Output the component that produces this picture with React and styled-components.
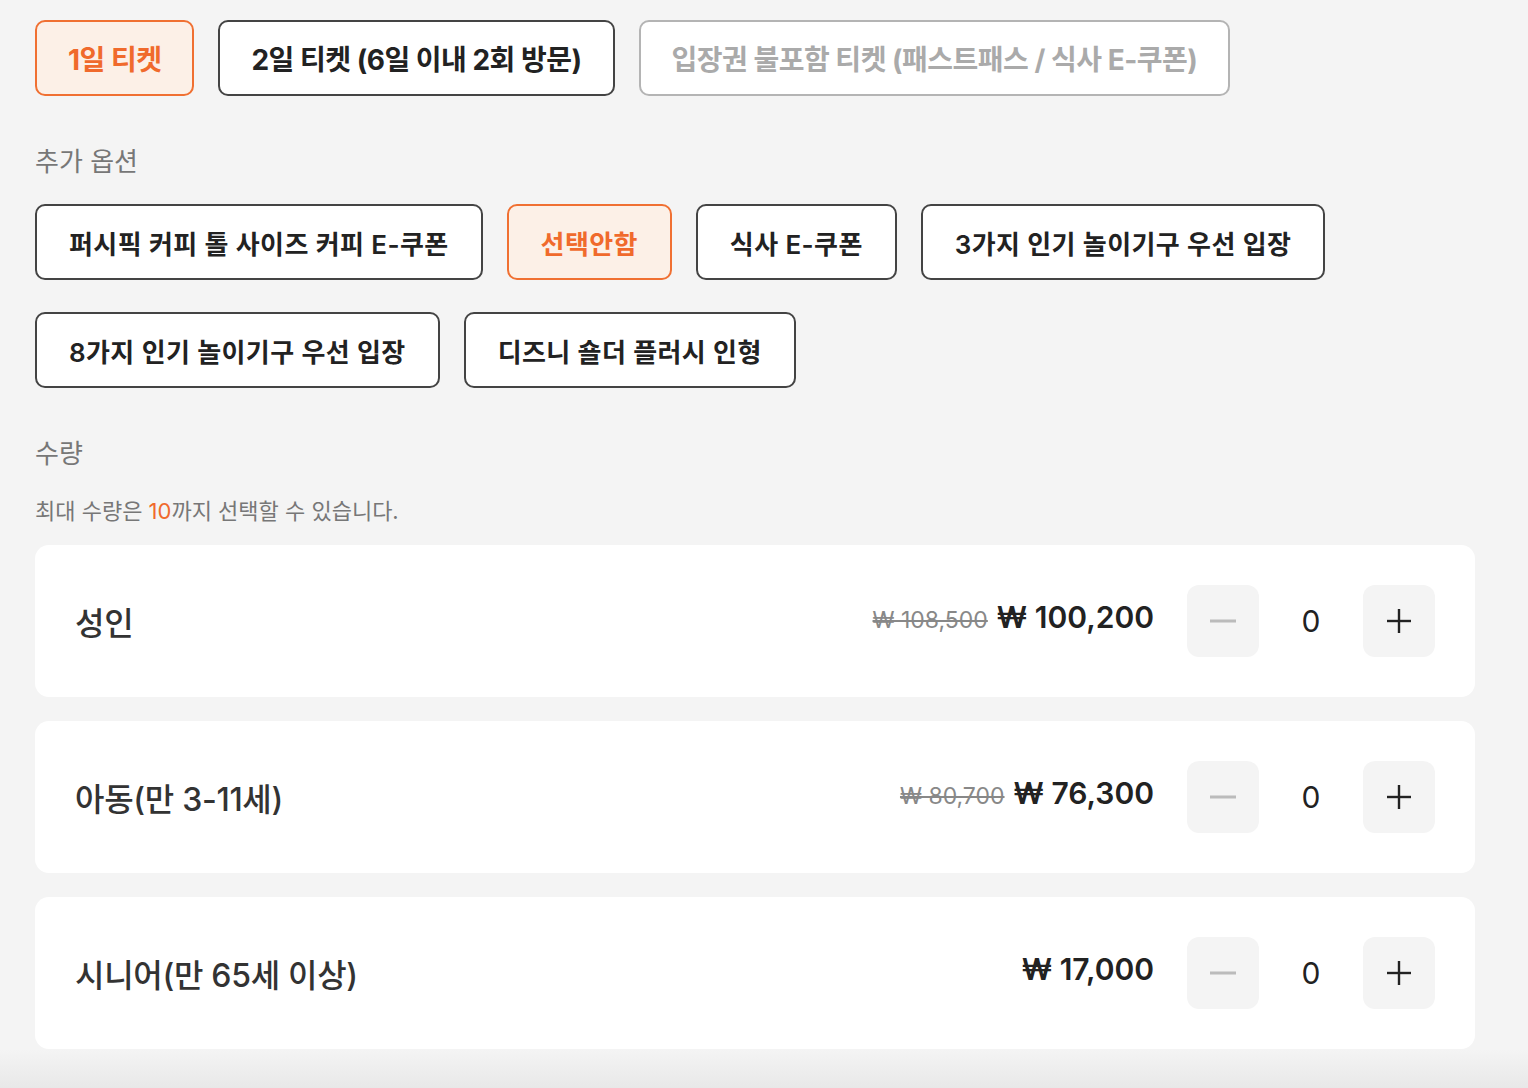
import React, { useState } from "react";
import styled, { createGlobalStyle, css } from "styled-components";

const GlobalStyle = createGlobalStyle`
  html, body {
    margin: 0;
    padding: 0;
  }
  body {
    background: linear-gradient(to bottom, #f4f4f4 0, #f4f4f4 1050px, #e8e8e8 1088px);
    min-height: 1088px;
    font-family: "Inter", "Noto Sans CJK KR", sans-serif;
    color: #222;
  }
`;

const Page = styled.div`
  padding: 20px 53px 40px 35px;
  display: flex;
  flex-direction: column;
`;

const ChipRow = styled.div`
  display: flex;
  flex-wrap: wrap;
  gap: ${(p) => p.$rowGap || 0}px 24px;
`;

const Chip = styled.button`
  height: 76px;
  padding: 0 ${(p) => (p.$big ? 31 : 32)}px;
  border-radius: 10px;
  border: 2px solid #444;
  background: #fff;
  color: #222;
  font-family: "Inter", "Noto Sans CJK KR", sans-serif;
  font-size: ${(p) => (p.$big ? 28 : 26)}px;
  font-weight: ${(p) => (p.$big ? 700 : 600)};
  letter-spacing: ${(p) => (p.$big ? -0.5 : 0.4)}px;
  cursor: pointer;
  white-space: nowrap;

  ${(p) =>
    p.$active &&
    css`
      border-color: #f07032;
      background: #fcf0e7;
      color: #f06a2c;
    `}
  ${(p) =>
    p.$disabled &&
    css`
      border-color: #b4b4b4;
      color: #aaa;
      cursor: default;
    `}
`;

const SectionLabel = styled.div`
  font-size: 26px;
  color: #777;
  line-height: 1;
  margin: ${(p) => p.$mt}px 0 ${(p) => p.$mb}px;
`;

const Notice = styled.div`
  font-size: 22px;
  color: #777;
  line-height: 1;
  margin: 1px 0 23px;

  em {
    font-style: normal;
    color: #f06a2c;
  }
`;

const Cards = styled.div`
  display: flex;
  flex-direction: column;
  gap: 24px;
`;

const Card = styled.div`
  height: 152px;
  background: #fff;
  border-radius: 14px;
  display: flex;
  align-items: center;
  padding: 0 40px;
`;

const CardLabel = styled.div`
  flex: 1;
  font-size: 32px;
  font-weight: 500;
  color: #333;
  letter-spacing: -0.3px;
`;

const Prices = styled.div`
  display: flex;
  align-items: baseline;
  gap: 9px;
  margin-right: 33px;
  margin-top: -8px;
`;

const OldPrice = styled.span`
  font-size: 23px;
  color: #888;
  text-decoration: line-through;
`;

const NewPrice = styled.span`
  font-size: 30px;
  font-weight: 600;
  color: #222;
`;

const StepButton = styled.button`
  width: 72px;
  height: 72px;
  border: none;
  border-radius: 12px;
  background: #f4f4f4;
  display: flex;
  align-items: center;
  justify-content: center;
  padding: 0;
  cursor: pointer;
`;

const Count = styled.div`
  width: 104px;
  text-align: center;
  font-size: 30px;
  color: #222;
`;

const tickets = [
  { label: "1일 티켓", active: true },
  { label: "2일 티켓 (6일 이내 2회 방문)" },
  { label: "입장권 불포함 티켓 (패스트패스 / 식사 E-쿠폰)", disabled: true },
];

const options = [
  "퍼시픽 커피 톨 사이즈 커피 E-쿠폰",
  "선택안함",
  "식사 E-쿠폰",
  "3가지 인기 놀이기구 우선 입장",
  "8가지 인기 놀이기구 우선 입장",
  "디즈니 숄더 플러시 인형",
];

const rows = [
  { label: "성인", old: "₩ 108,500", price: "₩ 100,200" },
  { label: "아동(만 3-11세)", old: "₩ 80,700", price: "₩ 76,300" },
  { label: "시니어(만 65세 이상)", price: "₩ 17,000" },
];

const Minus = ({ color }) => (
  <svg width="28" height="28" viewBox="0 0 28 28">
    <line x1="1" y1="14" x2="27" y2="14" stroke={color} strokeWidth="3" />
  </svg>
);

const Plus = () => (
  <svg width="28" height="28" viewBox="0 0 28 28">
    <line x1="2" y1="14" x2="26" y2="14" stroke="#222" strokeWidth="2.4" />
    <line x1="14" y1="2" x2="14" y2="26" stroke="#222" strokeWidth="2.4" />
  </svg>
);

const App = () => {
  const [option, setOption] = useState("선택안함");
  const [counts, setCounts] = useState([0, 0, 0]);

  const change = (i, d) =>
    setCounts((c) => c.map((v, j) => (j === i ? Math.min(10, Math.max(0, v + d)) : v)));

  return (
    <Page>
      <GlobalStyle />
      <ChipRow>
        {tickets.map((t) => (
          <Chip key={t.label} $big $active={t.active} $disabled={t.disabled}>
            {t.label}
          </Chip>
        ))}
      </ChipRow>

      <SectionLabel $mt={53} $mb={29}>추가 옵션</SectionLabel>
      <ChipRow $rowGap={32}>
        {options.map((o) => (
          <Chip key={o} $active={o === option} onClick={() => setOption(o)}>
            {o}
          </Chip>
        ))}
      </ChipRow>

      <SectionLabel $mt={53} $mb={32}>수량</SectionLabel>
      <Notice>
        최대 수량은 <em>10</em>까지 선택할 수 있습니다.
      </Notice>

      <Cards>
        {rows.map((r, i) => (
          <Card key={r.label}>
            <CardLabel>{r.label}</CardLabel>
            <Prices>
              {r.old && <OldPrice>{r.old}</OldPrice>}
              <NewPrice>{r.price}</NewPrice>
            </Prices>
            <StepButton onClick={() => change(i, -1)}>
              <Minus color={counts[i] > 0 ? "#222" : "#bbb"} />
            </StepButton>
            <Count>{counts[i]}</Count>
            <StepButton onClick={() => change(i, 1)}>
              <Plus />
            </StepButton>
          </Card>
        ))}
      </Cards>
    </Page>
  );
};

export default App;
